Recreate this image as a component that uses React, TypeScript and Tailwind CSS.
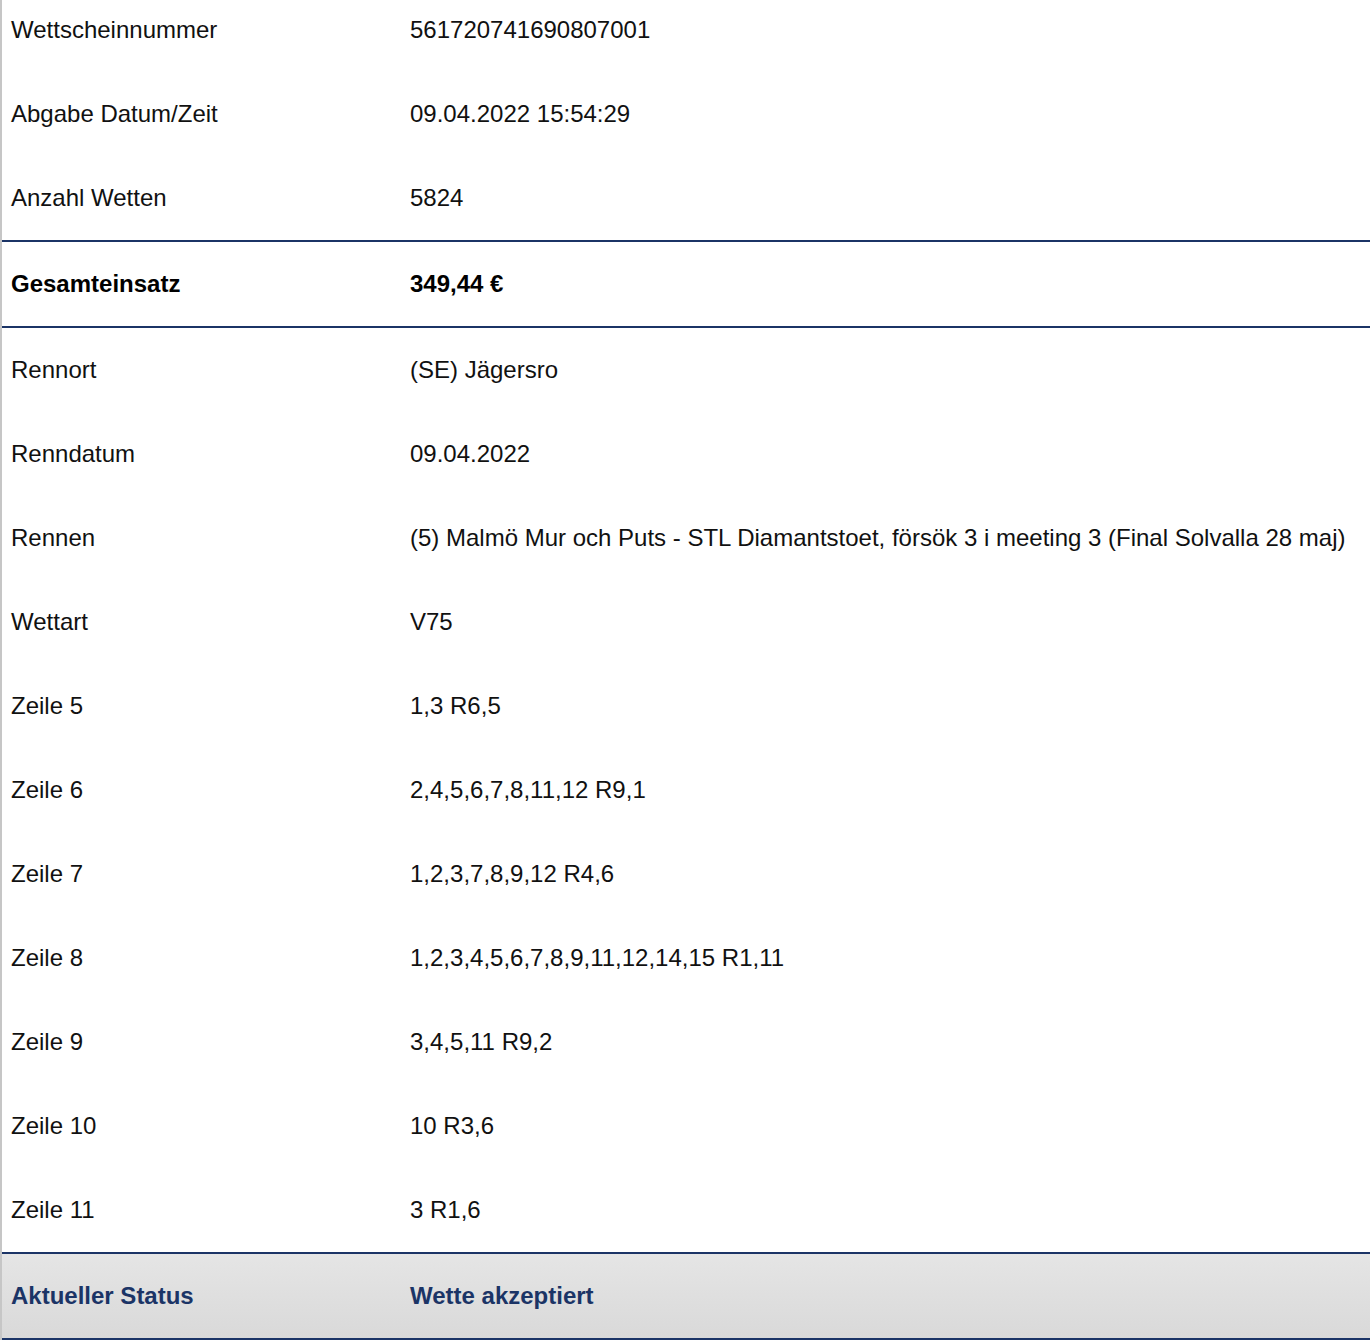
import React from 'react';

interface Row {
  label: string;
  value: string;
}

const topRows: Row[] = [
  { label: 'Wettscheinnummer', value: '561720741690807001' },
  { label: 'Abgabe Datum/Zeit', value: '09.04.2022 15:54:29' },
  { label: 'Anzahl Wetten', value: '5824' },
];

const detailRows: Row[] = [
  { label: 'Rennort', value: '(SE) Jägersro' },
  { label: 'Renndatum', value: '09.04.2022' },
  {
    label: 'Rennen',
    value: '(5) Malmö Mur och Puts - STL Diamantstoet, försök 3 i meeting 3 (Final Solvalla 28 maj)',
  },
  { label: 'Wettart', value: 'V75' },
  { label: 'Zeile 5', value: '1,3 R6,5' },
  { label: 'Zeile 6', value: '2,4,5,6,7,8,11,12 R9,1' },
  { label: 'Zeile 7', value: '1,2,3,7,8,9,12 R4,6' },
  { label: 'Zeile 8', value: '1,2,3,4,5,6,7,8,9,11,12,14,15 R1,11' },
  { label: 'Zeile 9', value: '3,4,5,11 R9,2' },
  { label: 'Zeile 10', value: '10 R3,6' },
  { label: 'Zeile 11', value: '3 R1,6' },
];

function InfoRow({ label, value, className = 'h-[84px]' }: Row & { className?: string }) {
  return (
    <div className={`grid grid-cols-[399px_1fr] items-center pl-[9px] ${className}`}>
      <span>{label}</span>
      <span className="whitespace-nowrap">{value}</span>
    </div>
  );
}

export default function App() {
  return (
    <div
      className="h-[1342px] w-[1370px] overflow-hidden bg-white text-[24px] leading-[28px] text-[#111]"
      style={{ fontFamily: '"Liberation Sans", Arial, sans-serif' }}
    >
      <div className="border-l-2 border-[#c6c6c6]">
        {/* Ticket header */}
        {topRows.map((row, i) => (
          <InfoRow
            key={row.label}
            {...row}
            className={i === 0 ? 'h-[72px] pb-[12px]' : 'h-[84px]'}
          />
        ))}

        {/* Total stake */}
        <div className="border-y-2 border-[#1b3466]">
          <InfoRow label="Gesamteinsatz" value="349,44 €" className="h-[84px] font-bold text-black" />
        </div>

        {/* Race and selections */}
        {detailRows.map((row) => (
          <InfoRow key={row.label} {...row} />
        ))}

        {/* Status */}
        <div className="border-y-2 border-[#1b3466] bg-gradient-to-b from-[#e5e5e5] to-[#d9d9d9]">
          <InfoRow
            label="Aktueller Status"
            value="Wette akzeptiert"
            className="h-[84px] font-bold text-[#1b3466]"
          />
        </div>
      </div>
    </div>
  );
}
